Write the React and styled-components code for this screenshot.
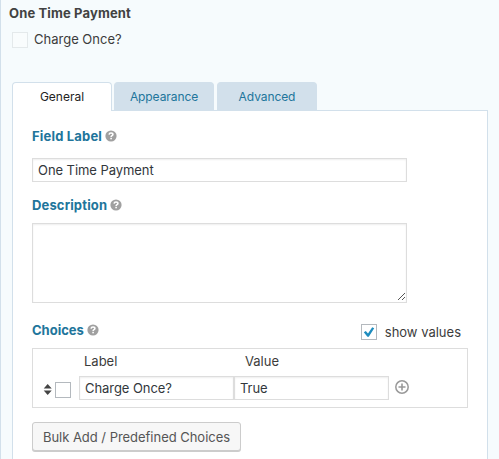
import React from "react";
import styled, { createGlobalStyle } from "styled-components";

const Global = createGlobalStyle`
  * { box-sizing: border-box; }
  html, body { margin: 0; overflow: hidden; }
  body { font-family: Inter, Roboto, sans-serif; font-size: 13px; color: #3c3c3c; background: #f6fbfd; }
  input, textarea, button { font: inherit; letter-spacing: inherit; margin: 0; }
`;

const Editor = styled.main`
  height: 459px;
  overflow: hidden;
  border-left: 1px solid #d2e0eb;
  background: #f6fbfd;
  padding: 4px 11px 0;
`;

const Title = styled.h1`
  margin: 0 0 0 -3px;
  height: 18px;
  font-size: 13px;
  line-height: 18px;
  font-weight: 700;
  letter-spacing: 0.14px;
  color: #424242;
`;

const Preview = styled.div`
  display: flex;
  align-items: flex-start;
  gap: 6px;
  margin-top: 10px;
  height: 16px;
  line-height: 14px;
`;

const Box = styled.span`
  display: flex;
  flex: none;
  align-items: center;
  justify-content: center;
  width: 16px;
  height: 16px;
  border: 1px solid ${(p) => (p.$faded ? "#e4e9eb" : "#b4b9be")};
  background: ${(p) => (p.$faded ? "#f9fcfd" : "#fff")};
`;

const Text = styled.span`
  line-height: ${(p) => p.$line || 16}px;
  white-space: nowrap;
`;

const Tabs = styled.nav`
  display: flex;
  height: 29px;
  margin: 34px 0 -1px;
  position: relative;
`;

const Tab = styled.button`
  width: 100px;
  height: ${(p) => (p.$active ? 29 : 28)}px;
  padding: 0 0 1px;
  border: 1px solid #d2e0eb;
  border-bottom: 0;
  border-radius: 4px 4px 0 0;
  background: ${(p) => (p.$active ? "#fff" : "#d2e0eb")};
  color: ${(p) => (p.$active ? "#222" : "#21759b")};
  font-size: 12px;
  && {
    margin-left: ${(p) => p.$gap || 0}px;
    letter-spacing: ${(p) => p.$spacing || 0}px;
  }
`;

const Panel = styled.section`
  width: 476px;
  height: 370px;
  border: 1px solid #d2e0eb;
  background: #fff;
  padding: 16px 19px 0;
`;

const Heading = styled.div`
  display: flex;
  align-items: center;
  gap: 3px;
  height: 18px;
  color: #21759b;
  font-weight: 700;
  letter-spacing: ${(p) => p.$spacing || 0}px;
`;

const Input = styled.input`
  display: block;
  width: ${(p) => p.$width}px;
  height: 24px;
  padding: 0 5px;
  border: 1px solid #ddd;
  border-radius: 0;
  outline: 0;
  background: #fff;
  box-shadow: inset 0 1px 2px rgba(0, 0, 0, 0.07);
  color: #32373c;
  && { letter-spacing: -0.06px; }
`;

const LabelInput = styled(Input)`
  && { margin: 13px 0 14px; }
`;

const AreaWrap = styled.div`
  display: flex;
  align-items: flex-end;
  justify-content: flex-end;
  width: 375px;
  height: 80px;
  margin: 9px 0 18px;
  padding: 0 1px 1px 0;
  border: 1px solid #ddd;
  box-shadow: inset 0 1px 2px rgba(0, 0, 0, 0.07);
`;

const ChoicesHead = styled.div`
  display: flex;
  justify-content: space-between;
  height: 27px;
  padding-right: 7px;
`;

const ShowValues = styled.div`
  display: flex;
  align-items: center;
  gap: 8px;
  height: 16px;
  margin-top: 3px;
`;

const Choices = styled.div`
  width: 436px;
  height: 60px;
  border: 1px solid #ddd;
`;

const Columns = styled.div`
  display: grid;
  grid-template-columns: 161px 1fr;
  height: 27px;
  padding: 4px 0 0 51px;
`;

const ChoiceRow = styled.div`
  display: flex;
  height: 24px;
  padding-left: 10px;
`;

const SortIcon = styled.svg`
  margin: 8px 3px 0 0;
  flex: none;
`;

const ChoiceCheck = styled(Box)`
  margin: 6px 8px 0 0;
`;

const AddIcon = styled.svg`
  margin: 4px 0 0 6px;
  flex: none;
`;

const BulkButton = styled.button`
  display: block;
  width: 209px;
  height: 29px;
  padding: 0;
  border: 1px solid #ccc;
  border-radius: 3px;
  background: #f7f7f7;
  box-shadow: 0 1px 0 #ccc;
  color: #555;
  && { margin-top: 14px; letter-spacing: -0.03px; }
`;

const Help = () => (
  <svg width="12" height="12" viewBox="0 0 12 12">
    <circle cx="6" cy="6" r="5.6" fill="#a0a0a0" />
    <path d="M4.1 4.6c.1-1.1.9-1.6 1.9-1.6s1.9.6 1.9 1.5C7.9 5.7 6.1 5.6 6.1 7" fill="none" stroke="#fff" strokeWidth="1.6" />
    <rect x="5.3" y="7.8" width="1.6" height="1.5" fill="#fff" />
  </svg>
);

const Check = () => (
  <svg width="12" height="12" viewBox="0 0 12 12">
    <path d="M.8 6.2 2.8 4.9 5 7.4 9.2 1.2 11.2 2.3 5.8 10.8H4.4Z" fill="#1e8cbe" />
  </svg>
);

const Grip = () => (
  <svg width="8" height="8" viewBox="0 0 8 8" shapeRendering="crispEdges">
    <path d="M.5 7.5l7-7M4.5 7.5l3-3" stroke="#555" strokeWidth="1" />
  </svg>
);

export default function App() {
  return (
    <>
      <Global />
      <Editor>
        <Title>One Time Payment</Title>
        <Preview>
          <Box $faded />
          <Text $line={14}>Charge Once?</Text>
        </Preview>
        <Tabs>
          <Tab $active>General</Tab>
          <Tab $gap={2} $spacing={-0.08}>Appearance</Tab>
          <Tab $gap={3} $spacing={-0.08}>Advanced</Tab>
        </Tabs>
        <Panel>
          <Heading $spacing={0.18}>Field Label <Help /></Heading>
          <LabelInput $width={375} defaultValue="One Time Payment" />
          <Heading $spacing={0.15}>Description <Help /></Heading>
          <AreaWrap><Grip /></AreaWrap>
          <ChoicesHead>
            <Heading>Choices <Help /></Heading>
            <ShowValues>
              <Box><Check /></Box>
              <Text>show values</Text>
            </ShowValues>
          </ChoicesHead>
          <Choices>
            <Columns>
              <Text>Label</Text>
              <Text>Value</Text>
            </Columns>
            <ChoiceRow>
              <SortIcon width="9" height="11" viewBox="0 0 9 11">
                <path d="M4.7 0 8.7 4.6H.7ZM4.7 11 .7 6.4H8.7Z" fill="#444" />
              </SortIcon>
              <ChoiceCheck />
              <Input $width={155} defaultValue="Charge Once?" />
              <Input $width={155} defaultValue="True" />
              <AddIcon width="14" height="14" viewBox="0 0 14 14">
                <circle cx="7" cy="7" r="6.2" fill="none" stroke="#999" strokeWidth="1.5" />
                <path d="M3.5 7h7M7 3.5v7" stroke="#999" strokeWidth="1.6" />
              </AddIcon>
            </ChoiceRow>
          </Choices>
          <BulkButton>Bulk Add / Predefined Choices</BulkButton>
        </Panel>
      </Editor>
    </>
  );
}
